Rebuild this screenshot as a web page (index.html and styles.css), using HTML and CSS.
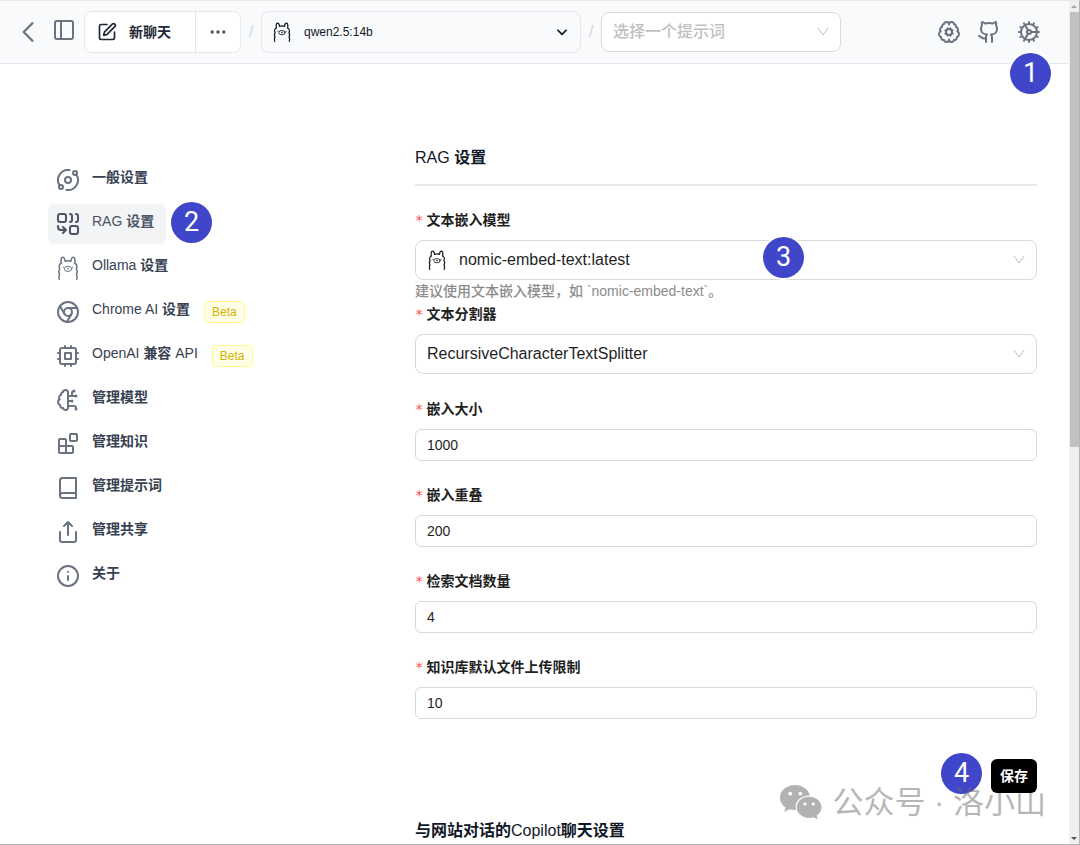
FILE: index.html
```html
<!DOCTYPE html>
<html lang="zh-CN">
<head>
    <meta charset="UTF-8">
    <meta name="viewport" content="width=device-width, initial-scale=1.0">
    <title>RAG 设置</title>
    <link rel="stylesheet" href="styles.css">
</head>
<body>
    <!-- shared llama icon -->
    <svg class="defs" aria-hidden="true">
        <symbol id="llama" viewBox="0 0 24 24">
            <path d="M5.2 7.2C4.8 4.400 5 1.200 6.400 1.200s2.500 1.800 2.700 4.100c1.800-.7 4-.7 5.800 0 .2-2.300 1.300-4.100 2.700-4.100s1.600 3.200 1.200 6"/>
            <path d="M5.2 7.200c-2 .9-2.700 3.400-1.500 5.600-1.100 1.700-1.100 3.400-.1 5-.8 1.700-.9 3.500-.3 5.400M18.800 7.200c2 .9 2.700 3.400 1.500 5.600 1.100 1.700 1.100 3.400.1 5 .8 1.700.9 3.500.3 5.400"/>
            <ellipse cx="12" cy="12.800" rx="3.800" ry="2.600" stroke-width="1"/>
            <path d="M11.600 12.400h.8M12 12.600v.6M7 11.200h.5M16.500 11.200h.5" stroke-width="1"/>
        </symbol>
    </svg>

    <div class="window">
        <div class="page">
            <header class="header">
                <button class="icon-btn back" aria-label="返回">
                    <svg class="icon icon-lg" viewBox="0 0 24 24"><path d="M15.75 19.5 8.25 12l7.5-7.5"/></svg>
                </button>
                <button class="icon-btn panel" aria-label="侧边栏">
                    <svg class="icon" viewBox="0 0 24 24"><rect x="3" y="3" width="18" height="18" rx="2"/><path d="M9 3v18"/></svg>
                </button>
                <div class="btn-group">
                    <button class="new-chat">
                        <svg class="icon icon-sm" viewBox="0 0 24 24"><path d="M12 3H5a2 2 0 0 0-2 2v14a2 2 0 0 0 2 2h14a2 2 0 0 0 2-2v-7"/><path d="M18.375 2.625a1 1 0 0 1 3 3l-9.013 9.014a2 2 0 0 1-.853.505l-2.873.84a.5.5 0 0 1-.62-.62l.84-2.873a2 2 0 0 1 .506-.852z"/></svg>
                        新聊天
                    </button>
                    <button class="more" aria-label="更多">
                        <svg class="icon icon-sm" viewBox="0 0 24 24"><circle cx="5" cy="12" r="1"/><circle cx="12" cy="12" r="1"/><circle cx="19" cy="12" r="1"/></svg>
                    </button>
                </div>
                <span class="slash">/</span>
                <button class="model-btn">
                    <svg class="icon icon-sm llama"><use href="#llama"/></svg>
                    <span>qwen2.5:14b</span>
                    <svg class="icon icon-xs" viewBox="0 0 24 24"><path d="m5 9 7 7 7-7"/></svg>
                </button>
                <span class="slash">/</span>
                <div class="select-box prompt">
                    <select aria-label="选择一个提示词"><option>选择一个提示词</option></select>
                    <svg class="arrow" viewBox="0 0 12 12"><path d="M1 2l5 7 5-7"/></svg>
                </div>
                <div class="header-icons">
                    <button class="icon-btn" aria-label="模型">
                        <svg class="icon" viewBox="0 0 24 24"><circle cx="12" cy="12" r="3"/><path d="M12 4.5a2.5 2.5 0 0 0-4.96-.46 2.5 2.5 0 0 0-1.98 3 2.5 2.5 0 0 0-1.32 4.24 3 3 0 0 0 .34 5.58 2.5 2.5 0 0 0 2.96 3.08A2.5 2.5 0 0 0 12 19.5a2.5 2.5 0 0 0 4.96.44 2.5 2.5 0 0 0 2.96-3.08 3 3 0 0 0 .34-5.58 2.5 2.5 0 0 0-1.32-4.24 2.5 2.5 0 0 0-1.98-3A2.5 2.5 0 0 0 12 4.5"/><path d="m15.7 10.4-.9.4M9.2 13.2l-.9.4M13.6 15.7l-.4-.9M10.8 9.2l-.4-.9M15.7 13.5l-.9-.4M9.2 10.9l-.9-.4M10.5 15.7l.4-.9M13.1 9.2l.4-.9"/></svg>
                    </button>
                    <a class="icon-btn" href="#" aria-label="GitHub">
                        <svg class="icon" viewBox="0 0 24 24"><path d="M15 22v-4a4.8 4.8 0 0 0-1-3.5c3 0 6-2 6-5.5.08-1.25-.27-2.48-1-3.5.28-1.15.28-2.35 0-3.5 0 0-1 0-3 1.5-2.64-.5-5.36-.5-8 0C6 2 5 2 5 2c-.3 1.15-.3 2.35 0 3.5A5.403 5.403 0 0 0 4 9c0 3.5 3 5.5 6 5.5-.39.49-.68 1.05-.85 1.65-.17.6-.22 1.23-.15 1.85v4"/><path d="M9 18c-4.51 2-5-2-7-2"/></svg>
                    </a>
                    <div class="anchor">
                        <a class="icon-btn" href="#" aria-label="设置">
                            <svg class="icon" viewBox="0 0 24 24"><circle cx="12" cy="12" r="8"/><circle cx="12" cy="12" r="2"/><path d="M12 2v2M12 22v-2M17 20.66l-1-1.73M11 10.27 7 3.34M20.66 17l-1.73-1M3.34 7l1.73 1M14 12h8M2 12h2M20.66 7l-1.73 1M3.34 17l1.73-1M17 3.34l-1 1.73M11 13.73l-4 6.93"/></svg>
                        </a>
                        <span class="step step-settings">1</span>
                    </div>
                </div>
            </header>

            <div class="content">
                <nav class="sidebar">
                    <ul>
                        <li><a href="#">
                            <svg class="icon" viewBox="0 0 24 24"><circle cx="12" cy="12" r="3"/><circle cx="19" cy="5" r="2"/><circle cx="5" cy="19" r="2"/><path d="M10.4 21.9a10 10 0 0 0 9.941-15.416M13.5 2.1a10 10 0 0 0-9.841 15.416"/></svg>
                            <span><b>一般设置</b></span></a></li>
                        <li><a href="#" class="active">
                            <svg class="icon" viewBox="0 0 24 24"><rect x="2" y="2" width="8" height="8" rx="2"/><path d="M14 2c1.1 0 2 .9 2 2v4c0 1.1-.9 2-2 2M20 2c1.1 0 2 .9 2 2v4c0 1.1-.9 2-2 2M10 18H5c-1.7 0-3-1.3-3-3v-1M7 21l3-3-3-3"/><rect x="14" y="14" width="8" height="8" rx="2"/></svg>
                            <span>RAG <b>设置</b></span></a><span class="step step-rag">2</span></li>
                        <li><a href="#">
                            <svg class="icon llama"><use href="#llama"/></svg>
                            <span>Ollama <b>设置</b></span></a></li>
                        <li><a href="#">
                            <svg class="icon" viewBox="0 0 24 24"><circle cx="12" cy="12" r="10"/><circle cx="12" cy="12" r="4"/><path d="M21.17 8H12M3.95 6.06 8.54 14M10.88 21.94 15.46 14"/></svg>
                            <span>Chrome AI <b>设置</b></span><em class="tag">Beta</em></a></li>
                        <li><a href="#">
                            <svg class="icon" viewBox="0 0 24 24"><rect x="4" y="4" width="16" height="16" rx="2"/><rect x="9" y="9" width="6" height="6"/><path d="M15 2v2M15 20v2M2 15h2M2 9h2M20 15h2M20 9h2M9 2v2M9 20v2"/></svg>
                            <span>OpenAI <b>兼容</b> API</span><em class="tag">Beta</em></a></li>
                        <li><a href="#">
                            <svg class="icon" viewBox="0 0 24 24"><path d="M12 4.5a2.5 2.5 0 0 0-4.96-.46 2.5 2.5 0 0 0-1.98 3 2.5 2.5 0 0 0-1.32 4.24 3 3 0 0 0 .34 5.58 2.5 2.5 0 0 0 2.96 3.08 2.5 2.5 0 0 0 4.91.05L12 20V4.5Z"/><path d="M16 8V5c0-1.1.9-2 2-2M12 13h4M12 18h6a2 2 0 0 1 2 2v1M12 8h8M20.5 8a.5.5 0 1 1-1 0 .5.5 0 0 1 1 0ZM16.5 13a.5.5 0 1 1-1 0 .5.5 0 0 1 1 0ZM20.5 21a.5.5 0 1 1-1 0 .5.5 0 0 1 1 0ZM18.5 3a.5.5 0 1 1-1 0 .5.5 0 0 1 1 0Z"/></svg>
                            <span><b>管理模型</b></span></a></li>
                        <li><a href="#">
                            <svg class="icon" viewBox="0 0 24 24"><rect x="14" y="2" width="7" height="7" rx="1"/><path d="M10 21V8a1 1 0 0 0-1-1H4a1 1 0 0 0-1 1v12a1 1 0 0 0 1 1h12a1 1 0 0 0 1-1v-5a1 1 0 0 0-1-1H3"/></svg>
                            <span><b>管理知识</b></span></a></li>
                        <li><a href="#">
                            <svg class="icon" viewBox="0 0 24 24"><path d="M4 19.5v-15A2.5 2.5 0 0 1 6.5 2H20v20H6.5a2.5 2.5 0 0 1 0-5H20"/></svg>
                            <span><b>管理提示词</b></span></a></li>
                        <li><a href="#">
                            <svg class="icon" viewBox="0 0 24 24"><path d="M4 12v8a2 2 0 0 0 2 2h12a2 2 0 0 0 2-2v-8M16 6l-4-4-4 4M12 2v13"/></svg>
                            <span><b>管理共享</b></span></a></li>
                        <li><a href="#">
                            <svg class="icon" viewBox="0 0 24 24"><circle cx="12" cy="12" r="10"/><path d="M12 16v-4M12 8h.01"/></svg>
                            <span><b>关于</b></span></a></li>
                    </ul>
                </nav>

                <main class="settings">
                    <h2 class="section-title">RAG <b>设置</b></h2>
                    <form>
                        <div class="field has-help">
                            <label for="embedModel">文本嵌入模型</label>
                            <div class="select-box">
                                <svg class="icon icon-sm llama"><use href="#llama"/></svg>
                                <select id="embedModel"><option>nomic-embed-text:latest</option></select>
                                <svg class="arrow" viewBox="0 0 12 12"><path d="M1 2l5 7 5-7"/></svg>
                                <span class="step step-model">3</span>
                            </div>
                            <p class="help">建议使用文本嵌入模型，如 `nomic-embed-text`。</p>
                        </div>
                        <div class="field has-select">
                            <label for="splitter">文本分割器</label>
                            <div class="select-box">
                                <select id="splitter"><option>RecursiveCharacterTextSplitter</option></select>
                                <svg class="arrow" viewBox="0 0 12 12"><path d="M1 2l5 7 5-7"/></svg>
                            </div>
                        </div>
                        <div class="field">
                            <label for="chunkSize">嵌入大小</label>
                            <input type="text" id="chunkSize" value="1000">
                        </div>
                        <div class="field">
                            <label for="chunkOverlap">嵌入重叠</label>
                            <input type="text" id="chunkOverlap" value="200">
                        </div>
                        <div class="field">
                            <label for="docCount">检索文档数量</label>
                            <input type="text" id="docCount" value="4">
                        </div>
                        <div class="field">
                            <label for="fileLimit">知识库默认文件上传限制</label>
                            <input type="text" id="fileLimit" value="10">
                        </div>
                        <div class="actions">
                            <button type="submit" class="save">保存</button>
                            <span class="step step-save">4</span>
                        </div>
                    </form>
                    <h2 class="section-title"><b>与网站对话的</b>Copilot<b>聊天设置</b></h2>
                </main>
            </div>
        </div>

        <div class="scrollbar">
            <span class="scroll-up"></span>
            <div class="track"><div class="thumb"></div></div>
            <span class="scroll-down"></span>
        </div>

        <div class="watermark">
            <svg viewBox="0 0 42 36">
                <path d="M15 0C6.5 0 0 5.6 0 12.7c0 4 2.2 7.5 5.6 9.9L4.3 27l5.2-2.7c1.7.5 3.5.8 5.5.8h1.2c-.4-1-.6-2-.6-3.1 0-6.4 6-11.4 13.7-11.4h.5C28.500 4.400 22.400 0 15 0z"/>
                <path d="M41.5 22.3c0-6-5.6-10.6-12.4-10.6s-12.4 4.7-12.4 10.6S22.2 33 29.1 33c1.500 0 3-.3 4.400-.7l4.200 2.300-1.100-3.900c3-2.100 4.900-5 4.900-8.400z"/>
                <g class="eyes"><circle cx="10.2" cy="8.7" r="1.9"/><circle cx="20.4" cy="8.7" r="1.9"/><circle cx="25" cy="19" r="1.6"/><circle cx="33.2" cy="19" r="1.6"/></g>
            </svg>
            <span>公众号 · 洛小山</span>
        </div>
    </div>
</body>
</html>
```
FILE: styles.css
```css
* { box-sizing: border-box; }
body { margin: 0; background: #fff; color: #1f1f1f; font-family: "Liberation Sans", "Noto Sans CJK SC", sans-serif; font-size: 14px; line-height: 22px; }
button, input, select { font: inherit; color: inherit; }
button { border: 0; padding: 0; background: none; cursor: pointer; }
a { color: inherit; text-decoration: none; }
b { font-weight: 700; }
ul { list-style: none; margin: 0; padding: 0; }
.defs { display: none; }

/* window frame */
.window { position: relative; display: flex; height: 100vh; overflow: hidden; border: 1px solid #b5b5b5; border-width: 1px 1px 1px 0; border-top-color: #e8e9eb; }
.page { flex: 1; min-width: 0; overflow: hidden; }
.scrollbar { display: flex; flex-direction: column; align-items: center; width: 10px; padding: 4px 0; background: #f0f0f0; }
.track { flex: 1; align-self: stretch; margin: 4px 0; padding-left: 1px; }
.thumb { height: 53%; background: #c1c1c1; }
.scroll-up, .scroll-down { border: 3px solid transparent; }
.scroll-up { border-top: 0; border-bottom-color: #a3a3a3; }
.scroll-down { border-bottom: 0; border-top-color: #505050; }

/* icons */
.icon { flex: none; display: block; width: 24px; height: 24px; fill: none; stroke: currentColor; stroke-width: 2; stroke-linecap: round; stroke-linejoin: round; }
.icon-lg { width: 28px; height: 28px; }
.icon-sm { width: 20px; height: 20px; }
.icon-xs { width: 14px; height: 14px; stroke-width: 3; }
.llama { stroke-width: 1.5; }
.icon-btn { display: block; color: #6b7280; }

/* header */
.header { display: flex; align-items: center; gap: 8px; height: 63px; padding: 0 28px 0 14px; background: #f9fafb; border-bottom: 1px solid #e5e7eb; }
.back { width: 30px; }
.panel { padding-bottom: 5px; }
.btn-group { display: flex; height: 42px; background: #fff; border: 1px solid #e5e7eb; border-radius: 8px; }
.new-chat { display: flex; align-items: center; gap: 12px; padding: 0 24px 0 12px; color: #1f2937; font-weight: 700; border-right: 1px solid #e5e7eb; }
.more { padding: 0 12px; color: #4b5563; }
.slash { width: 4px; color: #d1d5db; font-size: 16px; }
.model-btn { display: flex; align-items: center; gap: 12px; width: 320px; height: 42px; padding: 0 11px 0 10px; color: #111827; font-size: 12px; border: 1px solid #e5e7eb; border-radius: 8px; }
.model-btn span { flex: 1; text-align: left; }
.header-icons { display: flex; gap: 16px; margin-left: auto; }
.anchor { position: relative; }

/* layout */
.content { display: grid; grid-template-columns: minmax(220px, 335px) 1fr; gap: 32px; padding: 82px 32px 0 48px; }
.sidebar { padding-top: 14px; }
.sidebar li { position: relative; display: flex; margin-bottom: 4px; }
.sidebar a { display: flex; gap: 12px; padding: 8px 12px 8px 8px; border-radius: 6px; color: #374151; line-height: 18px; }
.sidebar .icon { color: #6b7280; }
.sidebar .active { background: #f3f4f6; color: #4b5563; }
.sidebar .active .icon { color: #4b5563; }
.tag { height: 22px; margin: 1px 0 0 2px; padding: 0 7px; border: 1px solid #fffb8f; border-radius: 4px; background: #feffe6; color: #d4b106; font-size: 12px; font-style: normal; line-height: 20px; }

/* form */
.section-title { margin: 0 0 23px; padding-bottom: 14px; border-bottom: 2px solid #e5e7eb; color: #111827; font-size: 16px; font-weight: 500; line-height: 24px; }
.field { margin-bottom: 23px; }
.has-help { margin-bottom: 0; }
.has-select { margin-bottom: 24px; }
.field label { display: flex; gap: 3px; padding-bottom: 9px; font-weight: 700; }
.field label::before { content: "*"; color: #ff4d4f; font-family: "DejaVu Sans Mono", monospace; font-weight: 400; }
.field input { display: block; width: 100%; height: 32px; padding: 0 11px; background: #fff; border: 1px solid #d9d9d9; border-radius: 6px; }
.select-box { position: relative; display: flex; align-items: center; gap: 12px; height: 40px; padding: 0 11px; background: #fff; border: 1px solid #d9d9d9; border-radius: 8px; font-size: 16px; }
.select-box select { flex: 1; min-width: 0; padding: 0; border: 0; outline: 0; background: none; appearance: none; }
.prompt { width: 240px; color: #bfbfbf; font-weight: 500; }
.arrow { flex: none; width: 12px; height: 12px; fill: none; stroke: #bfbfbf; }
.help { margin: 0; color: #8c8c8c; font-weight: 500; line-height: 23px; }
.actions { position: relative; display: flex; justify-content: flex-end; margin: 40px 0 26px; }
.save { position: relative; z-index: 2; height: 34px; padding: 0 9px; background: #000; color: #fff; border-radius: 6px; font-weight: 700; }

/* numbered step markers */
.step { position: absolute; width: 41px; height: 41px; border-radius: 50%; background: #4046ca; box-shadow: 0 0 0 2px #fff; color: #fff; font-family: Roboto, sans-serif; font-size: 27px; line-height: 41px; text-align: center; }
.step-settings { top: 33px; left: -7px; }
.step-rag { top: -2px; left: 123px; }
.step-model { top: -4px; left: 56%; }
.step-save { top: -6px; right: 55px; }

.watermark { position: absolute; right: 33px; bottom: 18px; z-index: 1; display: flex; align-items: center; gap: 10px; color: rgba(110, 110, 110, 0.5); font-size: 31px; line-height: 46px; }
.watermark svg { width: 42px; height: 36px; fill: #b2b2b2; }
.watermark .eyes { fill: #fff; }
```
